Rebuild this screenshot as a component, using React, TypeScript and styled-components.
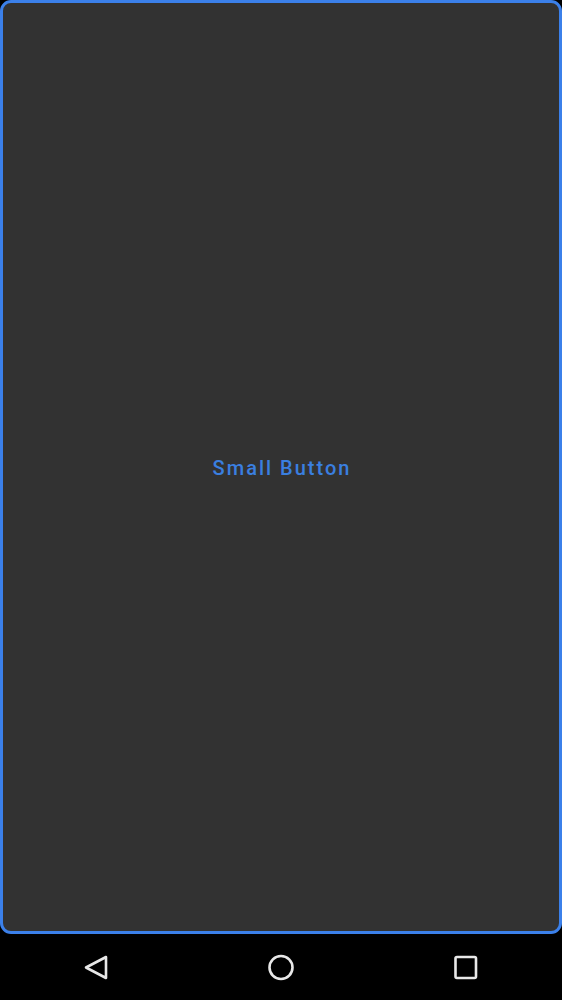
import React from "react";
import styled, { createGlobalStyle } from "styled-components";

const Global = createGlobalStyle`
  html, body { margin: 0; padding: 0; background: #000; }
  #root { width: 562px; height: 1000px; }
`;

const Screen = styled.div`
  width: 562px;
  height: 1000px;
  display: flex;
  flex-direction: column;
  background: #000;
`;

const Content = styled.main`
  height: 934px;
  box-sizing: border-box;
  border: 3px solid #3b80ea;
  border-radius: 11px;
  background: #323232;
  display: flex;
  align-items: center;
  justify-content: center;
`;

const TextButton = styled.button`
  background: transparent;
  border: none;
  color: #3a7fe0;
  font-family: Roboto, "Noto Sans", sans-serif;
  font-weight: 500;
  font-size: 20px;
  letter-spacing: 2px;
  line-height: 24px;
  padding: 8px 12px 8px 14px;
  margin-top: 2px;
  cursor: pointer;
`;

const NavBar = styled.nav`
  flex: 1;
  display: flex;
  align-items: center;
  justify-content: space-between;
  padding: 0 74px 0 74px;
`;

const NavIcon = styled.svg`
  width: 44px;
  height: 44px;
  fill: none;
  stroke: #e8e8e8;
  stroke-width: 2.6;
`;

export default function App() {
  return (
    <Screen>
      <Global />
      <Content>
        <TextButton>Small Button</TextButton>
      </Content>
      <NavBar>
        <NavIcon viewBox="0 0 44 44">
          <path d="M32 12 L12 22.5 L32 33 Z" strokeLinejoin="round" />
        </NavIcon>
        <NavIcon viewBox="0 0 44 44">
          <circle cx="22" cy="22.5" r="11.5" />
        </NavIcon>
        <NavIcon viewBox="0 0 44 44">
          <rect x="11.5" y="12" width="20.5" height="21" rx="1.5" />
        </NavIcon>
      </NavBar>
    </Screen>
  );
}
